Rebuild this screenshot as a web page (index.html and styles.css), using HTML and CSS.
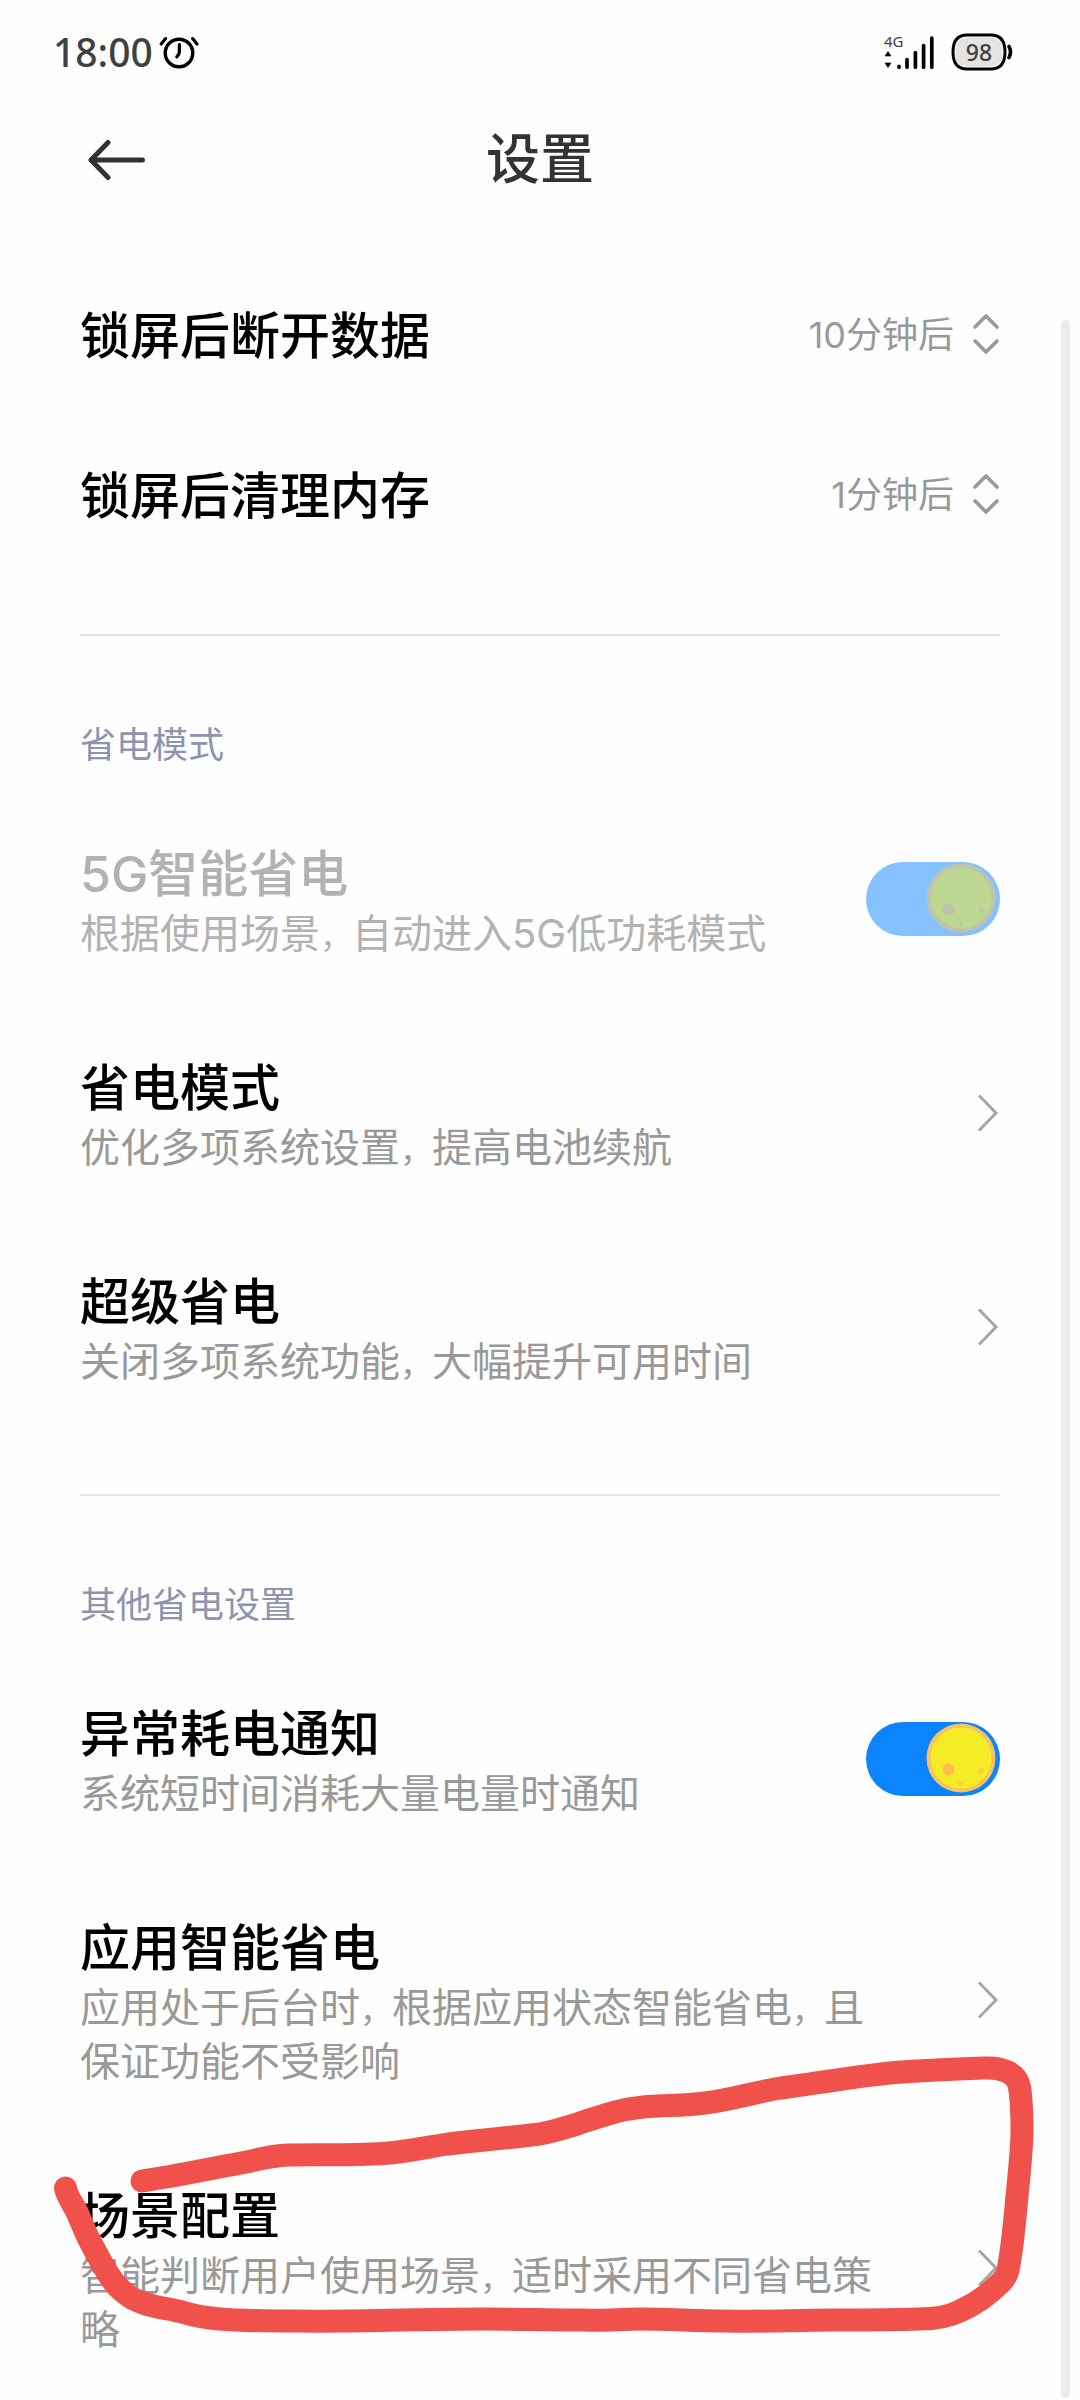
FILE: index.html
```html
<!DOCTYPE html>
<html lang="zh-CN">
<head>
<meta charset="utf-8">
<meta name="viewport" content="width=device-width, initial-scale=1">
<title>设置</title>
<link rel="stylesheet" href="styles.css">
</head>
<body>
<div class="screen">
  <div class="status">
    <div class="status-left">
      <span class="time">18:00</span>
      <svg class="alarm" width="40" height="34" viewBox="0 0 40 34" fill="none" stroke="#000" stroke-linecap="round" stroke-linejoin="round" aria-hidden="true">
        <circle cx="20" cy="18" r="13.8" stroke-width="3.4"/>
        <path d="M20.4 9.5V17Q20.4 19 17.8 21.8" stroke-width="3.2"/>
        <path d="M2.2 9L6.6 3.6M33.6 3.6L38 9" stroke-width="3.2"/>
      </svg>
    </div>
    <div class="status-right">
      <div class="signal">
        <span class="network">4G</span>
        <svg width="52" height="36" viewBox="0 0 52 36" aria-hidden="true">
          <path d="M4 17.500L7 22H1ZM4 33.500L7 29H1Z" fill="#000" stroke="#000" stroke-width="0.600"/>
          <path d="M15 32.300V33.200M23 25.500V33.200M31.400 18.500V33.200M39.600 11.500V33.200M47.800 4V33.200" stroke="#000" stroke-width="3.700" stroke-linecap="round"/>
        </svg>
      </div>
      <div class="battery">
        <svg width="62" height="38" viewBox="0 0 62 38" fill="none" aria-hidden="true">
          <rect x="4.500" y="4.500" width="47" height="29" rx="11" fill="#e3e3e3"/>
          <path d="M16 2H40C50 2 54 8 54 19S50 36 40 36H16C6 36 2 30 2 19S6 2 16 2Z" stroke="#000" stroke-width="3"/>
          <path d="M58 13.500Q61 19 58 24.500" stroke="#000" stroke-width="3.600" stroke-linecap="round"/>
        </svg>
        <span class="level">98</span>
      </div>
    </div>
  </div>

  <header class="header">
    <button class="back" type="button" aria-label="返回">
      <svg width="60" height="42" viewBox="0 0 60 42" fill="none" stroke="#333" stroke-width="5" stroke-linecap="round" stroke-linejoin="round" aria-hidden="true">
        <path d="M21 3.500L4 21L21 38.500M4 21H55.500"/>
      </svg>
    </button>
    <h1 class="heading">设置</h1>
  </header>

  <main class="list">
    <section class="section">
      <div class="row row-short">
        <label class="title" for="data-off">锁屏后断开数据</label>
        <span class="picker">
          <select class="value" id="data-off"><option>10分钟后</option></select>
          <svg width="28" height="42" viewBox="0 0 28 42" fill="none" stroke="#999" stroke-width="3.600" stroke-linecap="round" stroke-linejoin="round" aria-hidden="true"><path d="M3 14L14 3L25 14M3 28L14 39L25 28"/></svg>
        </span>
      </div>
      <div class="row row-short">
        <label class="title" for="memory-clean">锁屏后清理内存</label>
        <span class="picker">
          <select class="value" id="memory-clean"><option>1分钟后</option></select>
          <svg width="28" height="42" viewBox="0 0 28 42" fill="none" stroke="#999" stroke-width="3.600" stroke-linecap="round" stroke-linejoin="round" aria-hidden="true"><path d="M3 14L14 3L25 14M3 28L14 39L25 28"/></svg>
        </span>
      </div>
    </section>

    <section class="section">
      <h2 class="category">省电模式</h2>
      <label class="row row-disabled">
        <span class="text">
          <span class="title">5G智能省电</span>
          <span class="summary">根据使用场景<span class="comma">，</span>自动进入5G低功耗模式</span>
        </span>
        <span class="switch">
          <input class="switch-input" type="checkbox" role="switch" checked disabled>
          <svg class="knob" width="70" height="70" viewBox="0 0 70 70" aria-hidden="true">
            <circle cx="35" cy="35" r="34.500" fill="#f9c35b"/><circle cx="35" cy="35" r="30.500" fill="#f5eb27"/>
            <circle cx="22.500" cy="46.500" r="6" fill="#f9c050"/><circle cx="55" cy="48" r="2.800" fill="#f5cf40"/><circle cx="34" cy="61" r="2" fill="#f5cf40"/>
          </svg>
        </span>
      </label>
      <a class="row" href="#power-saving">
        <span class="text">
          <span class="title">省电模式</span>
          <span class="summary">优化多项系统设置<span class="comma">，</span>提高电池续航</span>
        </span>
        <svg class="chevron" width="24" height="42" viewBox="0 0 24 42" aria-hidden="true"><path d="M3 3.500L20 21L3 38.500"/></svg>
      </a>
      <a class="row" href="#super-saving">
        <span class="text">
          <span class="title">超级省电</span>
          <span class="summary">关闭多项系统功能<span class="comma">，</span>大幅提升可用时间</span>
        </span>
        <svg class="chevron" width="24" height="42" viewBox="0 0 24 42" aria-hidden="true"><path d="M3 3.500L20 21L3 38.500"/></svg>
      </a>
    </section>

    <section class="section">
      <h2 class="category">其他省电设置</h2>
      <label class="row">
        <span class="text">
          <span class="title">异常耗电通知</span>
          <span class="summary">系统短时间消耗大量电量时通知</span>
        </span>
        <span class="switch">
          <input class="switch-input" type="checkbox" role="switch" checked>
          <svg class="knob" width="70" height="70" viewBox="0 0 70 70" aria-hidden="true">
            <circle cx="35" cy="35" r="34.500" fill="#f9c35b"/><circle cx="35" cy="35" r="30.500" fill="#f5eb27"/>
            <circle cx="22.500" cy="46.500" r="6" fill="#f9c050"/><circle cx="55" cy="48" r="2.800" fill="#f5cf40"/><circle cx="34" cy="61" r="2" fill="#f5cf40"/>
          </svg>
        </span>
      </label>
      <a class="row" href="#app-saving">
        <span class="text">
          <span class="title">应用智能省电</span>
          <span class="summary">应用处于后台时<span class="comma">，</span>根据应用状态智能省电<span class="comma">，</span>且保证功能不受影响</span>
        </span>
        <svg class="chevron" width="24" height="42" viewBox="0 0 24 42" aria-hidden="true"><path d="M3 3.500L20 21L3 38.500"/></svg>
      </a>
      <a class="row row-marked" href="#scenes">
        <span class="text">
          <span class="title">场景配置</span>
          <span class="summary">智能判断用户使用场景<span class="comma">，</span>适时采用不同省电策略</span>
        </span>
        <svg class="chevron" width="24" height="42" viewBox="0 0 24 42" aria-hidden="true"><path d="M3 3.500L20 21L3 38.500"/></svg>
        <svg class="marker" viewBox="0 0 1080 266" aria-hidden="true">
          <path d="M142 47C175 42 208 35 241 29C258 26 268 22 288 21C322 20 355 22 389 19C410 17 428 13 448 10C480 6 508 4 540 0C550 -2 561 -5 571 -8C596 -16 614 -24 643 -27C664 -29 684 -28 705 -31C731 -34 755 -42 781 -46C821 -51 861 -59 902 -62C930 -64 957 -65 984 -66C1002 -67 1017 -61 1019.500 -47C1022 -32 1022 -16 1022 0C1021 27 1018 50 1016 73C1014 95 1012 116 1008 136C1007 141 1003 147 998 151C988 161 973 171 960 177C948 183 935 185 919 185C890 186 862 186 833 186C797 186 762 188 726 187C697 187 668 185 640 185C620 185 603 187 585 186C550 186 517 185 482 185C420 185 358 188 296 187C270 187 243 187 220 185C206 184 195 182 182 178C168 174 153 174 138 167C130 164 122 157 117 152C107 141 101 127 93 113C86 101 82 89 76 76C72 69 67 62 65.500 54"/>
        </svg>
      </a>
    </section>
  </main>
  <div class="scrollbar" aria-hidden="true"></div>
</div>
</body>
</html>
```
FILE: styles.css
```css
* { box-sizing: border-box; }

body {
  margin: 0;
  background: #fefefe;
  color: #000;
  font-family: Inter, "Noto Sans CJK SC", sans-serif;
}

.screen {
  position: relative;
  min-height: 100vh;
  overflow: hidden;
}

/* Status bar */
.status {
  display: flex;
  align-items: center;
  justify-content: space-between;
  height: 104px;
  padding: 0 67px 0 53px;
  font-family: "Noto Sans", sans-serif;
  color: #404040;
}

.status-left,
.status-right { display: flex; align-items: center; }
.status-left { gap: 6px; }
.status-right { gap: 15px; }
.time { font-size: 39px; font-weight: 500; line-height: 48px; }
.signal { position: relative; display: flex; }
.network { position: absolute; left: 0; top: 0; font-size: 15px; line-height: 15px; }
.battery { position: relative; display: flex; }

.level {
  position: absolute;
  left: 0;
  top: 0;
  width: 56px;
  text-align: center;
  font-size: 23px;
  font-weight: 500;
  line-height: 38px;
}

/* Title bar */
.header {
  display: grid;
  grid-template-columns: 1fr auto 1fr;
  align-items: center;
  height: 108px;
  padding: 0 87px;
  margin-bottom: 42px;
}

.back {
  display: flex;
  justify-self: start;
  padding: 4px 0 0;
  border: 0;
  background: none;
}

.heading {
  margin: 0;
  padding-top: 4px;
  font-size: 54px;
  font-weight: 500;
  line-height: 64px;
  color: #333;
}

/* Settings list */
.section + .section::before {
  content: "";
  display: block;
  height: 2px;
  margin: 60px 80px 0;
  background: #e5e5e5;
}

.category {
  margin: 0;
  padding: 82px 80px 20px;
  font-size: 36px;
  font-weight: 400;
  line-height: 54px;
  color: #8d93b0;
}

.row {
  display: flex;
  align-items: center;
  justify-content: space-between;
  padding: 45px 80px;
  color: inherit;
  text-decoration: none;
}

.text {
  display: flex;
  flex-direction: column;
  max-width: 820px;
  padding-top: 4px;
}

.title { font-size: 50px; font-weight: 500; line-height: 66px; }
.summary { font-size: 40px; line-height: 54px; color: #999; }
.comma { font-size: 32px; line-height: 32px; }
.row-short { height: 160px; padding: 0 80px; }
.row-short .title { padding-top: 4px; }
.row-disabled .title,
.row-disabled .summary { color: #b2b2b2; }

.picker { display: flex; align-items: center; gap: 18px; }

.value {
  appearance: none;
  field-sizing: content;
  margin: 0;
  padding: 2px 0 0;
  border: 0;
  background: none;
  font: inherit;
  font-size: 36px;
  line-height: 54px;
  color: #999;
}

.chevron {
  flex: none;
  fill: none;
  stroke: #a6a6a6;
  stroke-width: 3px;
}

.switch { position: relative; display: flex; flex: none; }

.switch-input {
  appearance: none;
  width: 134px;
  height: 74px;
  margin: 0;
  border-radius: 37px;
  background: #0d84ff;
}

.knob { position: absolute; top: 1px; right: 4px; }

.row-disabled .switch-input,
.row-disabled .knob { opacity: 0.5; }

/* Hand-drawn highlight around the last setting */
.row-marked { position: relative; padding-bottom: 43px; }

.marker {
  position: absolute;
  left: 0;
  top: 0;
  width: 100%;
  overflow: visible;
  fill: none;
  stroke: #f0524b;
  stroke-width: 23px;
  stroke-linecap: round;
  stroke-linejoin: round;
  pointer-events: none;
}

.scrollbar {
  position: absolute;
  top: 320px;
  right: 10px;
  bottom: 2px;
  width: 9px;
  border-radius: 5px;
  background: #ececec;
}
```
